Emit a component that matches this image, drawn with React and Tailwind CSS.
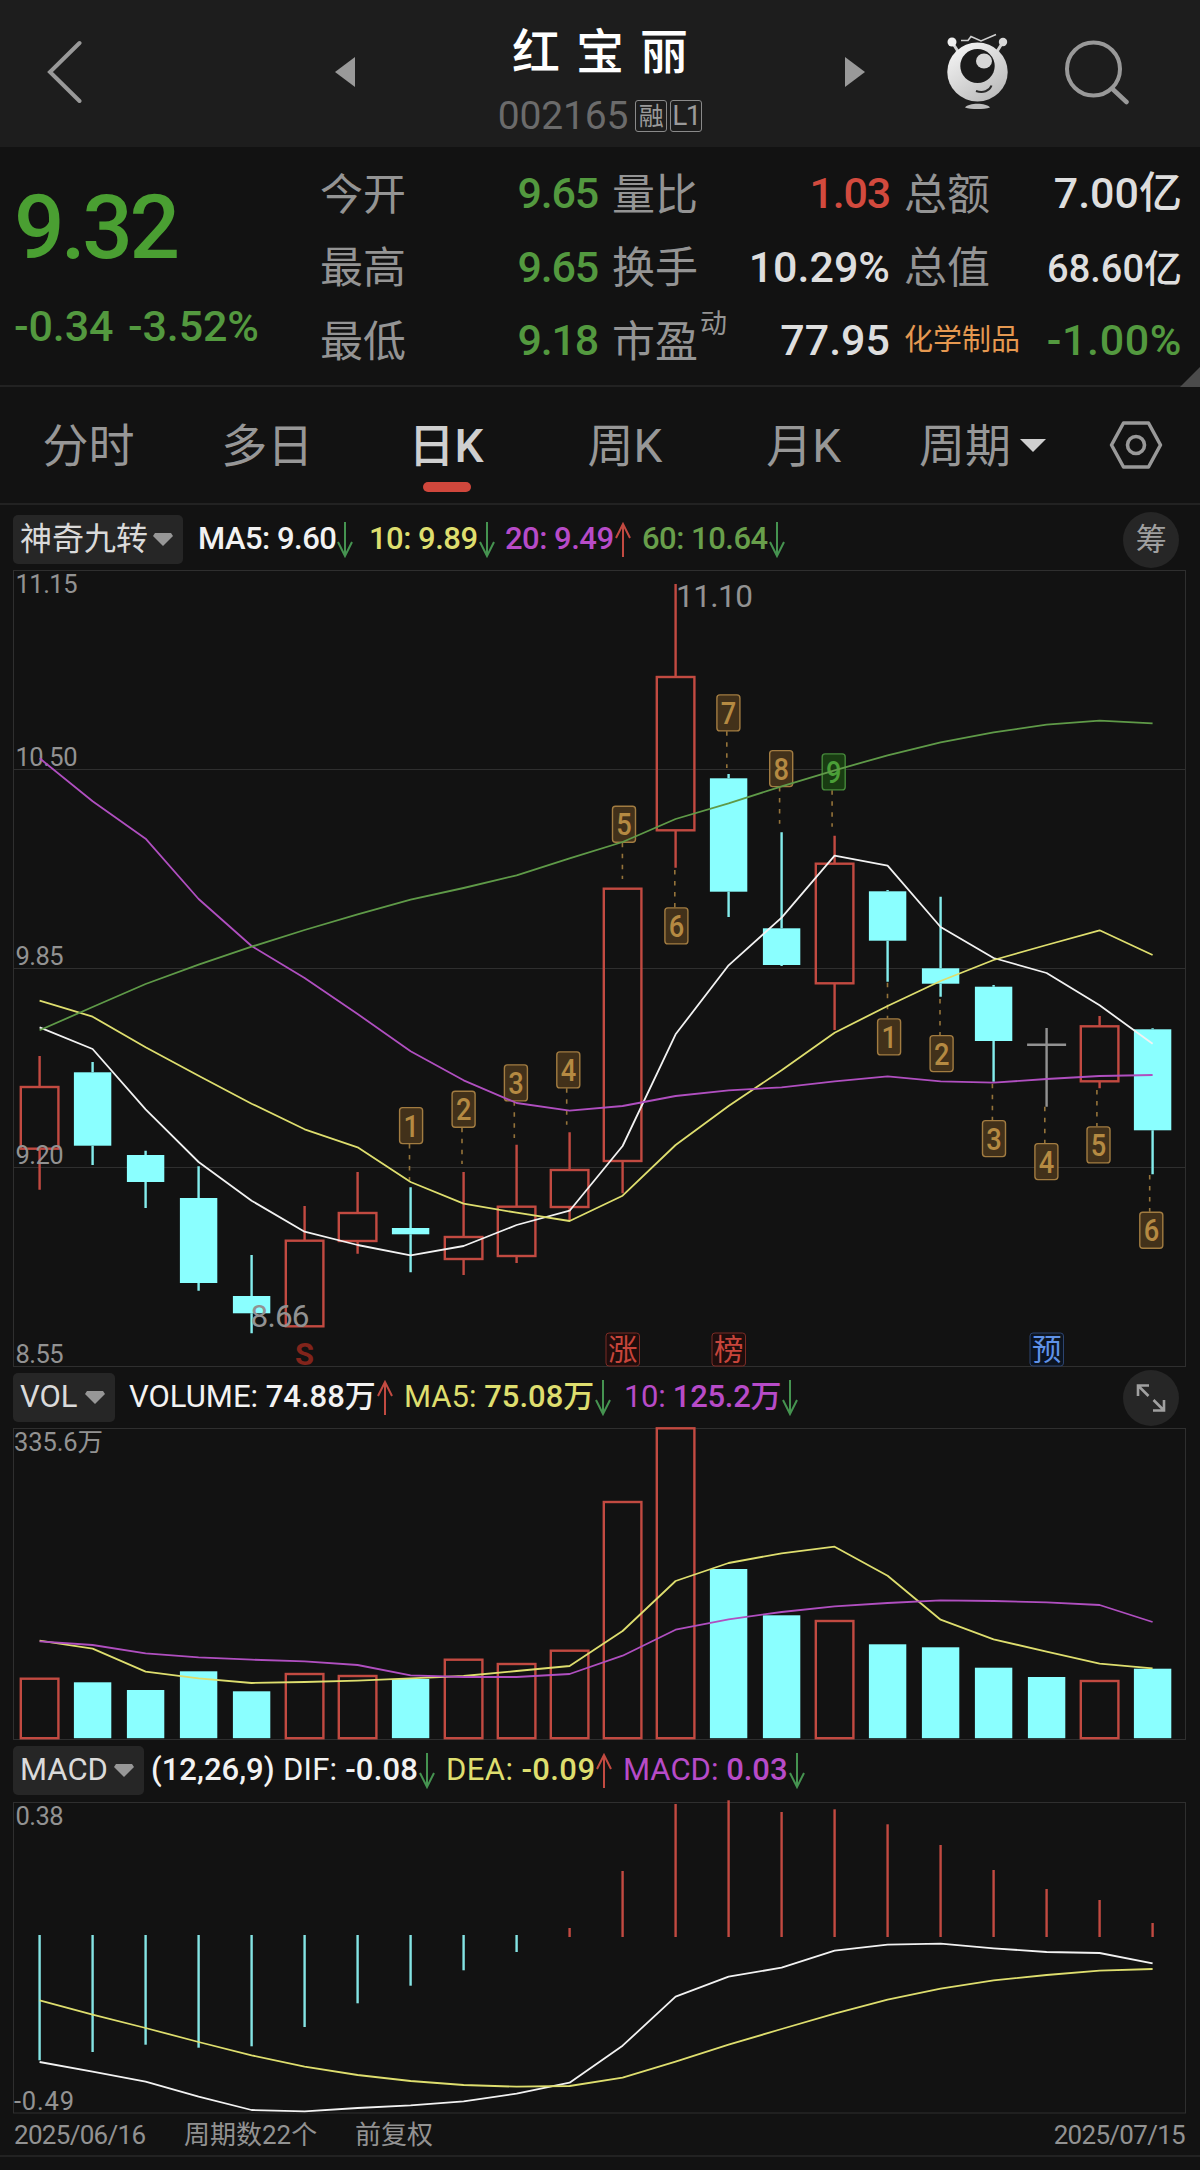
import React from "react";
import clsx from "clsx";

const RED = "#c24a41";
const CYAN = "#8affff";
const WHITE = "#f2f2f2";
const YELLOW = "#dede6e";
const PURPLE = "#b04fc0";
const GREEN = "#5f9a48";
const GRAY = "#929292";
const GRID = "#2f2f2f";

// x of the n-th period
const px = (i) => 39.6 + i * 53;

// [direction, high, body top, body bottom, low]
const candles = [
  ["up", 1056, 1087, 1148.7, 1189.7],
  ["down", 1062, 1072.3, 1145.7, 1165],
  ["down", 1150.7, 1155, 1182, 1208],
  ["down", 1166.3, 1198, 1283, 1290.7],
  ["down", 1255, 1296, 1313.3, 1333.3],
  ["up", 1206, 1240.7, 1326.3, 1326.3],
  ["up", 1172, 1213, 1241, 1253.7],
  ["down", 1187.3, 1228, 1234.3, 1272.3],
  ["up", 1172, 1237, 1259, 1275],
  ["up", 1144.7, 1206.7, 1256, 1263],
  ["up", 1132.3, 1170, 1207, 1220.3],
  ["up", 888.7, 888.7, 1161, 1193.3],
  ["up", 584, 677, 830.3, 867.7],
  ["down", 774, 778.3, 891.7, 917],
  ["down", 832.3, 928.3, 965, 966],
  ["up", 835.7, 863.7, 983.3, 1030],
  ["down", 890, 891.3, 940.7, 981.7],
  ["down", 896.7, 968.3, 983.7, 996.7],
  ["down", 985, 986.7, 1041, 1081.7],
  ["flat", 1028, 1044.7, 1044.7, 1106.7],
  ["up", 1016, 1026.3, 1081.3, 1088.3],
  ["down", 1028.3, 1029.3, 1130.3, 1174.3],
];

const ma5 = [1027.3, 1049, 1109.3, 1162, 1200.7, 1231.7, 1245, 1255.3, 1246, 1225, 1210.7, 1146, 1034.3, 965.3, 917.7, 855.7, 865.7, 927, 958, 973, 1005.3, 1043.7];
const ma10 = [1000.7, 1016.7, 1047.3, 1075.7, 1103.7, 1129.3, 1147.3, 1182, 1203.7, 1212.7, 1221, 1195.7, 1145, 1106, 1070.3, 1032.7, 1006, 981, 960, 945, 930.3, 955];
const ma20 = [758.3, 801.3, 838.7, 899, 946, 978, 1014, 1051.3, 1080.3, 1103, 1110.7, 1106, 1096, 1090.3, 1087.3, 1081.3, 1076.3, 1081.3, 1082.7, 1079, 1076, 1075];
const ma60 = [1030.3, 1007, 984, 964.7, 946.7, 930, 914.3, 899.7, 888, 875.3, 858.3, 842, 819, 803.3, 786.3, 770.3, 755.3, 742.3, 732.3, 724.7, 720.7, 723.3];

// [number, left, top, far end of the dashed line]
const marks = [
  [1, 399, 1107, 1180],
  [2, 451.5, 1090.7, 1164],
  [3, 503.8, 1064.3, 1138],
  [4, 556.2, 1051.3, 1124.7],
  [5, 611.9, 805.7, 879],
  [6, 664.3, 907.3, 870],
  [7, 716.3, 694.3, 768],
  [8, 769.1, 750, 823.7],
  [9, 821.6, 753.3, 826.7],
  [1, 877, 1018.3, 982.7],
  [2, 929.5, 1035, 999],
  [3, 981.9, 1120, 1083.7],
  [4, 1034.3, 1143, 1106.7],
  [5, 1086.4, 1126.3, 1090],
  [6, 1139.2, 1211.7, 1175],
];

const events = [
  { text: "涨", x: 605.5, color: "#c8453b", border: "#7b2b25", bg: "#1f0d0c" },
  { text: "榜", x: 711.5, color: "#c8453b", border: "#7b2b25", bg: "#1f0d0c" },
  { text: "预", x: 1029.5, color: "#5f92e8", border: "#2c4470", bg: "#0c1420" },
];

const volumes = [1678.7, 1682.3, 1690, 1671.3, 1691.3, 1674, 1676, 1679, 1659.7, 1664, 1650.7, 1502, 1428.3, 1569, 1615.3, 1621, 1644.3, 1647.3, 1667.7, 1677, 1681, 1668.7];
const volMa5 = [1640.7, 1648.7, 1671.7, 1678.3, 1683, 1682, 1680.7, 1678.3, 1676, 1671, 1666, 1631, 1581, 1563, 1553.3, 1546.7, 1575.7, 1619.7, 1639.3, 1651.7, 1663.7, 1668.3];
const volMa10 = [1641.3, 1645, 1653.3, 1657.3, 1659.7, 1661.3, 1665, 1675.3, 1677, 1677, 1674, 1655.7, 1629.7, 1619.3, 1612, 1606.3, 1603, 1600.3, 1601, 1602.3, 1605, 1622];

const macd = [2060.3, 2052, 2044.7, 2047.7, 2046.3, 2027, 2003.3, 1985.7, 1970.3, 1952, 1928, 1871, 1804, 1800.3, 1812, 1809.3, 1824.3, 1845, 1870, 1889, 1900, 1923];
const dif = [2062, 2071.7, 2081.7, 2096.7, 2110, 2111.3, 2108, 2105.3, 2101.3, 2093.7, 2082.7, 2045.7, 1996.7, 1976.7, 1967.7, 1950.7, 1944.7, 1943.7, 1948.3, 1952, 1953, 1963.3];
const dea = [2000.3, 2014.7, 2028, 2042, 2055.3, 2066.7, 2075, 2081, 2085, 2086.7, 2086, 2077.7, 2061.7, 2044.7, 2029, 2013.7, 1999.7, 1988.7, 1980.3, 1975, 1970.7, 1969];

const quotes = [
  [
    { label: "今开", value: "9.65", color: "text-[#53993f]" },
    { label: "最高", value: "9.65", color: "text-[#53993f]" },
    { label: "最低", value: "9.18", color: "text-[#53993f]" },
  ],
  [
    { label: "量比", value: "1.03", color: "text-[#d24a3e]" },
    { label: "换手", value: "10.29%", color: "text-[#dedede]" },
    { label: "市盈", sup: "动", value: "77.95", color: "text-[#dedede]" },
  ],
  [
    { label: "总额", value: "7.00亿", color: "text-[#dedede]" },
    { label: "总值", value: "68.60亿", color: "text-[#dedede]", small: true },
    { label: "化学制品", industry: true, value: "-1.00%", color: "text-[#53993f]" },
  ],
];

const tabs = ["分时", "多日", "日K", "周K", "月K", "周期"];

function Line({ data, color }) {
  return (
    <polyline
      points={data.map((y, i) => `${px(i)},${y}`).join(" ")}
      fill="none"
      stroke={color}
      strokeWidth="1.8"
      strokeLinejoin="round"
    />
  );
}

function Frame({ top, bottom }) {
  return (
    <rect x="13.5" y={top} width="1172" height={bottom - top} fill="none" stroke={GRID} />
  );
}

function AxisLabel({ x = 15.5, y, size = 25.5, width, children }) {
  return (
    <text x={x} y={y} fontSize={size} fill={GRAY} textLength={width}>
      {children}
    </text>
  );
}

function Bar({ i, up, top, bottom }) {
  return up ? (
    <rect x={px(i) - 18.8} y={top} width="37.6" height={bottom - top} fill="none" stroke={RED} strokeWidth="2.4" />
  ) : (
    <rect x={px(i) - 18.7} y={top} width="37.4" height={bottom - top} fill={CYAN} />
  );
}

function Candle({ i, data }) {
  const [dir, high, top, bottom, low] = data;
  const x = px(i);
  if (dir === "flat") {
    return (
      <path d={`M${x} ${high}V${low}M${x - 19.5} ${top}H${x + 19.5}`} stroke={GRAY} strokeWidth="2.4" />
    );
  }
  return (
    <g>
      <path
        d={`M${x} ${high}V${top}M${x} ${bottom}V${low}`}
        stroke={dir === "up" ? RED : "#84eded"}
        strokeWidth="2.4"
      />
      <Bar i={i} up={dir === "up"} top={top} bottom={bottom} />
    </g>
  );
}

function Mark({ data }) {
  const [n, x, y, end] = data;
  const green = n === 9;
  const above = end > y;
  const from = above ? y + 37 : end;
  const to = above ? end : y;
  return (
    <g>
      <path d={`M${x + 10.5} ${from}V${to}`} stroke="#94733a" strokeWidth="1.6" strokeDasharray="4.5 6.5" />
      <rect
        x={x + 0.6}
        y={y + 0.6}
        width="23"
        height="36"
        rx="3"
        fill={green ? "#193c12" : "#42311a"}
        stroke={green ? "#45883a" : "#a27c41"}
        strokeWidth="1.4"
      />
      <text
        x={x + 12.2}
        y={y + 29.5}
        fontSize="31"
        textAnchor="middle"
        textLength="15.5"
        lengthAdjust="spacingAndGlyphs"
        fontWeight="500"
        fill={green ? "#4a9f37" : "#b58a42"}
      >
        {n}
      </text>
    </g>
  );
}

function KChart() {
  return (
    <svg className="block overflow-visible" width="1200" height="797" viewBox="0 570 1200 797">
      <Frame top={570.5} bottom={1366.5} />
      <path d="M14 769.5H1185M14 968.5H1185M14 1167.5H1185" stroke={GRID} />
      {candles.map((c, i) => (
        <Candle key={i} i={i} data={c} />
      ))}
      <AxisLabel y={592.7} width={62}>11.15</AxisLabel>
      <AxisLabel y={766} width={62}>10.50</AxisLabel>
      <AxisLabel y={964.7} width={48}>9.85</AxisLabel>
      <AxisLabel y={1163.7} width={48}>9.20</AxisLabel>
      <AxisLabel y={1362.7} width={48}>8.55</AxisLabel>
      <AxisLabel x={676} y={606.7} size={31.5} width={77}>11.10</AxisLabel>
      <AxisLabel x={250.5} y={1326.7} size={31.5} width={59}>8.66</AxisLabel>
      <text x="304.6" y="1364.7" fontSize="32" fontWeight="700" fill="#82241b" textAnchor="middle" textLength="19" lengthAdjust="spacingAndGlyphs">
        S
      </text>
      {events.map((e) => (
        <g key={e.text}>
          <rect x={e.x + 0.5} y="1333" width="33.5" height="33" rx="3" fill={e.bg} stroke={e.border} />
          <text x={e.x + 17.2} y="1360" fontSize="29.5" fill={e.color} textAnchor="middle">
            {e.text}
          </text>
        </g>
      ))}
      {marks.map((m) => (
        <Mark key={m[1]} data={m} />
      ))}
      <Line data={ma5} color={WHITE} />
      <Line data={ma10} color={YELLOW} />
      <Line data={ma20} color={PURPLE} />
      <Line data={ma60} color={GREEN} />
    </svg>
  );
}

function VolumeChart() {
  return (
    <svg className="block overflow-visible" width="1200" height="312" viewBox="0 1428 1200 312">
      <Frame top={1428.5} bottom={1739.5} />
      <AxisLabel x={14} y={1451} width={89}>335.6万</AxisLabel>
      {volumes.map((v, i) => (
        <Bar key={i} i={i} up={candles[i][0] === "up"} top={v} bottom={1738.2} />
      ))}
      <Line data={volMa5} color={YELLOW} />
      <Line data={volMa10} color={PURPLE} />
    </svg>
  );
}

function MacdChart() {
  return (
    <svg className="block overflow-visible" width="1200" height="312" viewBox="0 1802 1200 312">
      <Frame top={1802.5} bottom={2113} />
      {macd.map((y, i) => (
        <path
          key={i}
          d={y > 1937 ? `M${px(i)} 1935V${y}` : `M${px(i)} ${y}V1937`}
          stroke={y > 1937 ? "#84e4e4" : RED}
          strokeWidth="2.4"
        />
      ))}
      <AxisLabel y={1824.7} width={48}>0.38</AxisLabel>
      <AxisLabel x={14} y={2110} width={60}>-0.49</AxisLabel>
      <Line data={dif} color={WHITE} />
      <Line data={dea} color={YELLOW} />
    </svg>
  );
}

function TrendArrow({ up }) {
  return (
    <svg className="ml-px shrink-0" width="16" height="36" viewBox="0 0 16 36">
      {up ? (
        <path d="M8 35V2M1 16L8 2L15 16" fill="none" stroke="#c24a41" strokeWidth="2" />
      ) : (
        <path d="M8 0V34M1 20L8 34L15 20" fill="none" stroke="#459350" strokeWidth="2" />
      )}
    </svg>
  );
}

function Item({ className, label, up, children }) {
  return (
    <div className={clsx("flex shrink-0 items-center whitespace-pre", className)}>
      <span className="mb-0.5">
        {label && <span className="font-normal">{label}: </span>}
        {children}
      </span>
      <TrendArrow up={up} />
    </div>
  );
}

function Select({ className, children }) {
  return (
    <div
      className={clsx(
        "flex h-[49px] shrink-0 items-center justify-between rounded-[5px] bg-[#262626] pr-2.5 pl-[7px] font-normal tracking-normal text-[#dadada]",
        className
      )}
    >
      <span className="mb-0.5">{children}</span>
      <svg width="20" height="13" viewBox="0 0 20 13">
        <path d="M2 0H18L20 3L10 13L0 3Z" fill="#979797" />
      </svg>
    </div>
  );
}

function RoundButton({ children }) {
  return (
    <div className="mr-[21px] ml-auto flex size-14 shrink-0 items-center justify-center rounded-full bg-[#262626] font-normal text-[#a0a0a0]">
      {children}
    </div>
  );
}

function Header() {
  return (
    <div className="flex h-[147px] items-center bg-[#1d1d1d] pl-[46px]">
      <svg className="mb-1 shrink-0" width="36" height="64" viewBox="0 0 36 64">
        <path d="M33.5 3L4 32L33.5 61" fill="none" stroke="#999" strokeWidth="4" strokeLinecap="round" />
      </svg>
      <svg className="mb-1 ml-[252px] shrink-0" width="22" height="32" viewBox="0 0 22 32">
        <path d="M21 1V31L1 16Z" fill="#999" />
      </svg>
      <div className="flex w-[488px] flex-col items-center pt-4">
        <div className="mr-[-16px] h-[58px] text-5xl leading-[58px] font-medium tracking-[16px] text-white">
          红宝丽
        </div>
        <div className="mt-[11px] flex h-[46px] items-center">
          <span className="text-[39px] leading-none tracking-[-0.2px] text-[#6b6b6b]">002165</span>
          <span className="ml-[7px] flex h-8 w-8 items-center justify-center rounded-[3px] border border-[#8a8a8a] text-[25px] leading-none text-[#9a9a9a]">
            融
          </span>
          <span className="ml-[3px] flex h-8 w-8 items-center justify-center rounded-[3px] border border-[#8a8a8a] text-[28px] leading-none tracking-[-1.5px] text-[#9a9a9a]">
            L1
          </span>
        </div>
      </div>
      <svg className="mb-1 shrink-0" width="22" height="32" viewBox="0 0 22 32">
        <path d="M1 1V31L21 16Z" fill="#999" />
      </svg>
      {/* assistant robot */}
      <svg className="mb-1 ml-20 shrink-0" width="64" height="78" viewBox="0 0 64 78">
        <defs>
          <linearGradient id="robot" x1="0" y1="0" x2="0.7" y2="1">
            <stop offset="0" stopColor="#fafafa" />
            <stop offset="1" stopColor="#bcbcbc" />
          </linearGradient>
        </defs>
        <path d="M6 9L13 20M57 9L50 20" stroke="#cfcfcf" strokeWidth="3" />
        <circle cx="6" cy="9" r="4.5" fill="#efefef" />
        <circle cx="57" cy="9" r="4.2" fill="#d8d8d8" />
        <path d="M15 7.5H22L25 3.5L35 8L50 1.5" fill="none" stroke="#cfcfcf" strokeWidth="1.6" />
        <ellipse cx="31.5" cy="39" rx="30.2" ry="29.5" fill="url(#robot)" />
        <ellipse cx="31.5" cy="33" rx="17.2" ry="17" fill="#1b1b1b" />
        <ellipse cx="38" cy="28" rx="8" ry="7.5" fill="#d6d6d6" />
        <path d="M30 58C37 60.5 43.5 58 45.5 52.5" fill="none" stroke="#2a2a2a" strokeWidth="2" />
        <path d="M19 74.5C23 69.5 40 69.5 44 74.5C38 76.5 25 76.5 19 74.5Z" fill="#bdbdbd" />
      </svg>
      <svg className="mb-1 ml-[54px] shrink-0" width="66" height="66" viewBox="0 0 66 66">
        <circle cx="29.5" cy="30" r="26.5" fill="none" stroke="#999" strokeWidth="4" />
        <path d="M48 49.5L62.5 63" stroke="#999" strokeWidth="4.5" strokeLinecap="round" />
      </svg>
    </div>
  );
}

function QuotePanel() {
  return (
    <div className="relative flex h-[240px] border-b-2 border-[#222] pr-[18px] pl-[13px]">
      <div className="w-[308px] shrink-0 text-[#53993f]">
        <div className="mt-[36px] ml-px text-[89px] leading-[90px] font-medium tracking-[-3.5px] text-[#4a9f32]">
          9.32
        </div>
        <div className="mt-[28px] ml-px text-[43px] leading-[50px] font-medium tracking-[-0.1px] [word-spacing:4px]">
          -0.34 -3.52%
        </div>
      </div>
      <div className="grid flex-1 grid-cols-3 gap-x-[15px]">
        {quotes.map((col, c) => (
          <div key={c} className="pt-2.5">
            {col.map((q) => (
              <div key={q.label} className="flex h-[73.5px] items-center justify-between leading-none">
                <span
                  className={clsx(
                    "relative -ml-px",
                    q.industry ? "text-[29px] text-[#e59850]" : "mt-[3px] text-[43px] text-[#949494]"
                  )}
                >
                  {q.label}
                  {q.sup && <span className="absolute -top-2.5 left-[88px] text-[27px]">{q.sup}</span>}
                </span>
                <span
                  className={clsx(
                    "font-medium whitespace-nowrap",
                    q.small ? "mt-1 text-[38px]" : "text-[43px]",
                    q.value.length < 5 && "tracking-[-1.2px]",
                    q.value.startsWith("-") && "tracking-[0.6px]",
                    q.color
                  )}
                >
                  {q.value}
                </span>
              </div>
            ))}
          </div>
        ))}
      </div>
      <svg className="absolute right-0 -bottom-0.5" width="20" height="20" viewBox="0 0 20 20">
        <path d="M20 0V20H0Z" fill="#4b4b4b" />
      </svg>
    </div>
  );
}

function Tabs() {
  return (
    <div className="flex h-[118px] items-center border-b-2 border-[#222]">
      <div className="grid w-[1073px] shrink-0 grid-cols-6">
        {tabs.map((t) => (
          <div
            key={t}
            className={clsx(
              "relative flex h-[116px] items-center justify-center pt-0.5 pr-0.5 text-[46px]",
              t === "日K" ? "font-medium text-[#cfcfcf]" : "text-[#979797]"
            )}
          >
            {t}
            {t === "日K" && (
              <span className="absolute bottom-[11px] left-1/2 h-2.5 w-12 -translate-x-1/2 rounded-full bg-[#d0473c]" />
            )}
            {t === "周期" && (
              <svg className="mb-0.5 ml-[9px]" width="26" height="13" viewBox="0 0 26 13">
                <path d="M0 0H26L13 13Z" fill="#cfcfcf" />
              </svg>
            )}
          </div>
        ))}
      </div>
      <div className="flex flex-1 justify-center pr-px">
        <svg width="54" height="50" viewBox="0 0 54 50">
          <path
            d="M14.5 3H39.5L51.5 25L39.5 47H14.5L2.5 25Z"
            fill="none"
            stroke="#999"
            strokeWidth="3.5"
            strokeLinejoin="round"
          />
          <circle cx="27" cy="25" r="8.5" fill="none" stroke="#999" strokeWidth="3.6" />
        </svg>
      </div>
    </div>
  );
}

export default function App() {
  return (
    <div className="h-[2170px] w-[1200px] overflow-hidden bg-[#121212] font-[Roboto,'Noto_Sans_CJK_SC',sans-serif]">
      <Header />
      <QuotePanel />
      <Tabs />

      {/* K line */}
      <div className="mt-2.5 mb-1.5 flex h-[49px] items-center pl-[13px] text-[31px] leading-none font-medium tracking-[-0.5px]">
        <Select className="w-[170px] text-[32px]">神奇九转</Select>
        <Item className="ml-[15px] w-[171px] text-[#f2f2f2]">MA5: 9.60</Item>
        <Item className="w-[136px] text-[#dede6e]">10: 9.89</Item>
        <Item className="w-[137px] text-[#b74bc8]" up>20: 9.49</Item>
        <Item className="text-[#689f4b]">60: 10.64</Item>
        <RoundButton>筹</RoundButton>
      </div>
      <KChart />

      {/* Volume */}
      <div className="my-1.5 flex h-[49px] items-center pl-[13px] text-[31px] leading-none font-medium">
        <Select className="w-[102px]">VOL</Select>
        <Item className="ml-[14px] w-[275px] text-[#f2f2f2]" label="VOLUME" up>74.88万</Item>
        <Item className="w-[220px] text-[#dede6e]" label="MA5">75.08万</Item>
        <Item className="tracking-[-0.3px] text-[#b74bc8]" label="10">125.2万</Item>
        <RoundButton>
          <svg width="30" height="28" viewBox="0 0 30 28" fill="none" stroke="#a0a0a0" strokeWidth="2.6">
            <path d="M13 1.5H2V12M2 1.5L12.5 12M17 26.5H28V16M28 26.5L17.5 16" />
          </svg>
        </RoundButton>
      </div>
      <VolumeChart />

      {/* MACD */}
      <div className="mt-1.5 mb-[7px] flex h-[49px] items-center pl-[13px] text-[31px] leading-none font-medium">
        <Select className="w-[131px]">MACD</Select>
        <div className="mb-0.5 ml-[7px] w-[132px] text-[#f2f2f2]">(12,26,9)</div>
        <Item className="w-[163px] tracking-[0.2px] text-[#f2f2f2]" label="DIF">-0.08</Item>
        <Item className="w-[177px] tracking-[0.4px] text-[#dede6e]" label="DEA" up>-0.09</Item>
        <Item className="text-[#b74bc8]" label="MACD">0.03</Item>
      </div>
      <MacdChart />

      <div className="flex h-[43px] items-center border-b-2 border-[#222] pr-[15px] pl-3.5 text-[26px] leading-none text-[#929292]">
        <span className="w-[170px] tracking-[-0.7px]">2025/06/16</span>
        <span className="w-[171px]">周期数22个</span>
        <span>前复权</span>
        <span className="ml-auto tracking-[-0.7px]">2025/07/15</span>
      </div>
    </div>
  );
}
